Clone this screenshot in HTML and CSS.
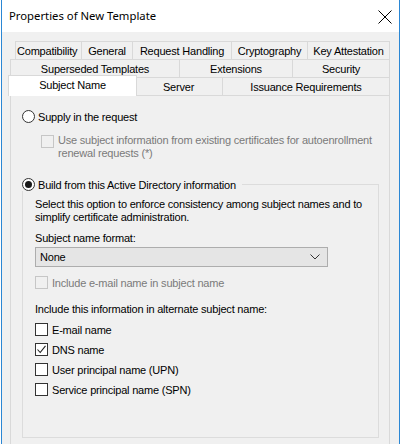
FILE: index.html
```html
<!DOCTYPE html>
<html>
<head>
<meta charset="utf-8">
<link rel="stylesheet" href="styles.css">
</head>
<body>
<div class="window">
  <div class="titlebar">
    <span class="title">Properties of New Template</span>
    <svg class="close" width="14" height="14" viewBox="0 0 14 14"><path d="M0.5 0.5 L13.5 13.5 M13.5 0.5 L0.5 13.5" stroke="#000" stroke-width="1" fill="none"/></svg>
  </div>
  <div class="client">
    <div class="tabs">
      <div class="tabrow row1">
        <div class="tab w66 first-tab">Compatibility</div>
        <div class="tab w51">General</div>
        <div class="tab w99">Request Handling</div>
        <div class="tab w76">Cryptography</div>
        <div class="tab w83 last">Key Attestation</div>
      </div>
      <div class="tabrow row2">
        <div class="tab w169">Superseded Templates</div>
        <div class="tab w113">Extensions</div>
        <div class="tab w98 last">Security</div>
      </div>
      <div class="tabrow row3">
        <div class="tab w125 selected">Subject Name</div>
        <div class="tab w87">Server</div>
        <div class="tab w168 last">Issuance Requirements</div>
      </div>
    </div>
    <div class="panel">
      <div class="option">
        <span class="radio"></span>
        <span>Supply in the request</span>
      </div>
      <div class="suboption disabled">
        <span class="check disabled-box"></span>
        <span class="wrap">Use subject information from existing certificates for autoenrollment renewal requests (*)</span>
      </div>
      <div class="group">
        <div class="group-head">
          <div class="option">
            <span class="radio on"></span>
            <span>Build from this Active Directory information</span>
          </div>
          <div class="group-line"></div>
        </div>
        <div class="group-body">
          <p class="desc">Select this option to enforce consistency among subject names and to simplify certificate administration.</p>
          <div class="label">Subject name format:</div>
          <div class="combo">
            <span>None</span>
            <svg width="10" height="6" viewBox="0 0 10 6"><path d="M0.5 0.5 L5 5 L9.5 0.5" stroke="#333" stroke-width="1" fill="none"/></svg>
          </div>
          <div class="checkrow disabled first">
            <span class="check disabled-box"></span>
            <span>Include e-mail name in subject name</span>
          </div>
          <div class="label alt">Include this information in alternate subject name:</div>
          <div class="checklist">
            <div class="checkrow"><span class="check"></span><span>E-mail name</span></div>
            <div class="checkrow"><span class="check"><svg width="11" height="11" viewBox="0 0 11 11"><path d="M1.5 5.5 L4.2 8.5 L9.5 1.8" stroke="#222" stroke-width="1.1" fill="none"/></svg></span><span>DNS name</span></div>
            <div class="checkrow"><span class="check"></span><span>User principal name (UPN)</span></div>
            <div class="checkrow"><span class="check"></span><span>Service principal name (SPN)</span></div>
          </div>
        </div>
      </div>
    </div>
  </div>
</div>
</body>
</html>
```
FILE: styles.css
```css
html, body {
  margin: 0;
  padding: 0;
  background: #ffffff;
}
body {
  width: 401px;
  height: 444px;
  overflow: hidden;
}
.window {
  margin-left: 1px;
  width: 397px;
  height: 444px;
  border-left: 1px solid #2b87d4;
  border-right: 1px solid #2b87d4;
  display: flex;
  flex-direction: column;
  font-family: "Liberation Sans", Arial, sans-serif;
  font-size: 11px;
  letter-spacing: -0.2px;
  color: #000;
}
.titlebar {
  height: 32px;
  flex: none;
  background: #fff;
  display: flex;
  align-items: center;
  justify-content: space-between;
  padding: 0 7px 0 7px;
}
.title {
  font-family: "Noto Sans", "Open Sans", sans-serif;
  font-size: 11.3px;
  letter-spacing: 0;
  color: #000;
  padding-bottom: 1px;
}
.close {
  display: block;
  margin-top: 1px;
}
.client {
  flex: 1;
  background: #f0f0f0;
  padding: 9px 0 0 8px;
}
.tabs {
  display: flex;
  flex-direction: column;
}
.tabrow {
  display: flex;
  height: 18px;
}
.row1 {
  margin-left: 5px;
}
.tab {
  box-sizing: border-box;
  height: 18px;
  border-top: 1px solid #d9d9d9;
  border-left: 1px solid #d9d9d9;
  display: flex;
  align-items: center;
  justify-content: center;
  background: #f0f0f0;
  white-space: nowrap;
}
.tab.first-tab {
  justify-content: flex-start;
  padding-left: 1px;
}
.tab.last {
  border-right: 1px solid #d9d9d9;
}
.tab.selected {
  background: #fff;
  height: 21px;
  margin-top: -2px;
  margin-left: -2px;
  margin-right: -2px;
  border-right: 1px solid #d9d9d9;
  position: relative;
  z-index: 2;
  padding-bottom: 2px;
}
.row3 .selected + .tab {
  border-left: none;
}
.w66 { width: 66px; }
.w51 { width: 51px; }
.w99 { width: 99px; }
.w76 { width: 76px; }
.w83 { width: 83px; }
.w169 { width: 169px; }
.w113 { width: 113px; }
.w98 { width: 98px; }
.w125 { width: 129px; }
.w87 { width: 87px; }
.w168 { width: 168px; }
.panel {
  box-sizing: border-box;
  width: 380px;
  height: 360px;
  border: 1px solid #d9d9d9;
  background: #f0f0f0;
  padding: 14px 10px 0 11px;
}
.option {
  display: flex;
  align-items: center;
  gap: 3px;
  height: 13px;
  white-space: nowrap;
}
.radio {
  box-sizing: border-box;
  width: 13px;
  height: 13px;
  border: 1px solid #333;
  border-radius: 50%;
  background: #fff;
  display: flex;
  align-items: center;
  justify-content: center;
  flex: none;
}
.radio.on::after {
  content: "";
  width: 7px;
  height: 7px;
  border-radius: 50%;
  background: #1a1a1a;
}
.suboption {
  display: flex;
  align-items: flex-start;
  gap: 4px;
  margin: 12px 0 0 19px;
}
.wrap {
  line-height: 13px;
  margin-top: -1px;
  width: 318px;
}
.disabled {
  color: #7a7a7a;
}
.check {
  box-sizing: border-box;
  width: 13px;
  height: 13px;
  border: 1px solid #333;
  background: #fff;
  flex: none;
  display: flex;
  align-items: center;
  justify-content: center;
}
.check.disabled-box {
  border-color: #c6c6c6;
  background: #f0f0f0;
}
.group {
  margin-top: 18px;
  width: 357px;
}
.group-head {
  display: flex;
  align-items: flex-end;
  height: 13px;
}
.group-head .option {
  padding-right: 6px;
}
.group-line {
  flex: 1;
  box-sizing: border-box;
  height: 7px;
  border-top: 1px solid #dcdcdc;
  border-right: 1px solid #dcdcdc;
}
.group-body {
  box-sizing: border-box;
  height: 247px;
  border: 1px solid #dcdcdc;
  border-top: none;
  padding: 7px 12px 0 12px;
}
.desc {
  margin: 0;
  line-height: 13px;
}
.label {
  margin-top: 8px;
  line-height: 13px;
}
.combo {
  box-sizing: border-box;
  margin-top: 2px;
  width: 293px;
  height: 20px;
  border: 1px solid #adadad;
  background: #e5e5e5;
  display: flex;
  align-items: center;
  justify-content: space-between;
  padding: 0 7px 0 4px;
}
.checkrow {
  display: flex;
  align-items: center;
  gap: 4px;
  height: 13px;
  white-space: nowrap;
}
.checkrow.first {
  margin-top: 9px;
}
.label.alt {
  margin-top: 14px;
}
.checklist {
  margin-top: 7px;
  display: flex;
  flex-direction: column;
  gap: 7px;
}
```
